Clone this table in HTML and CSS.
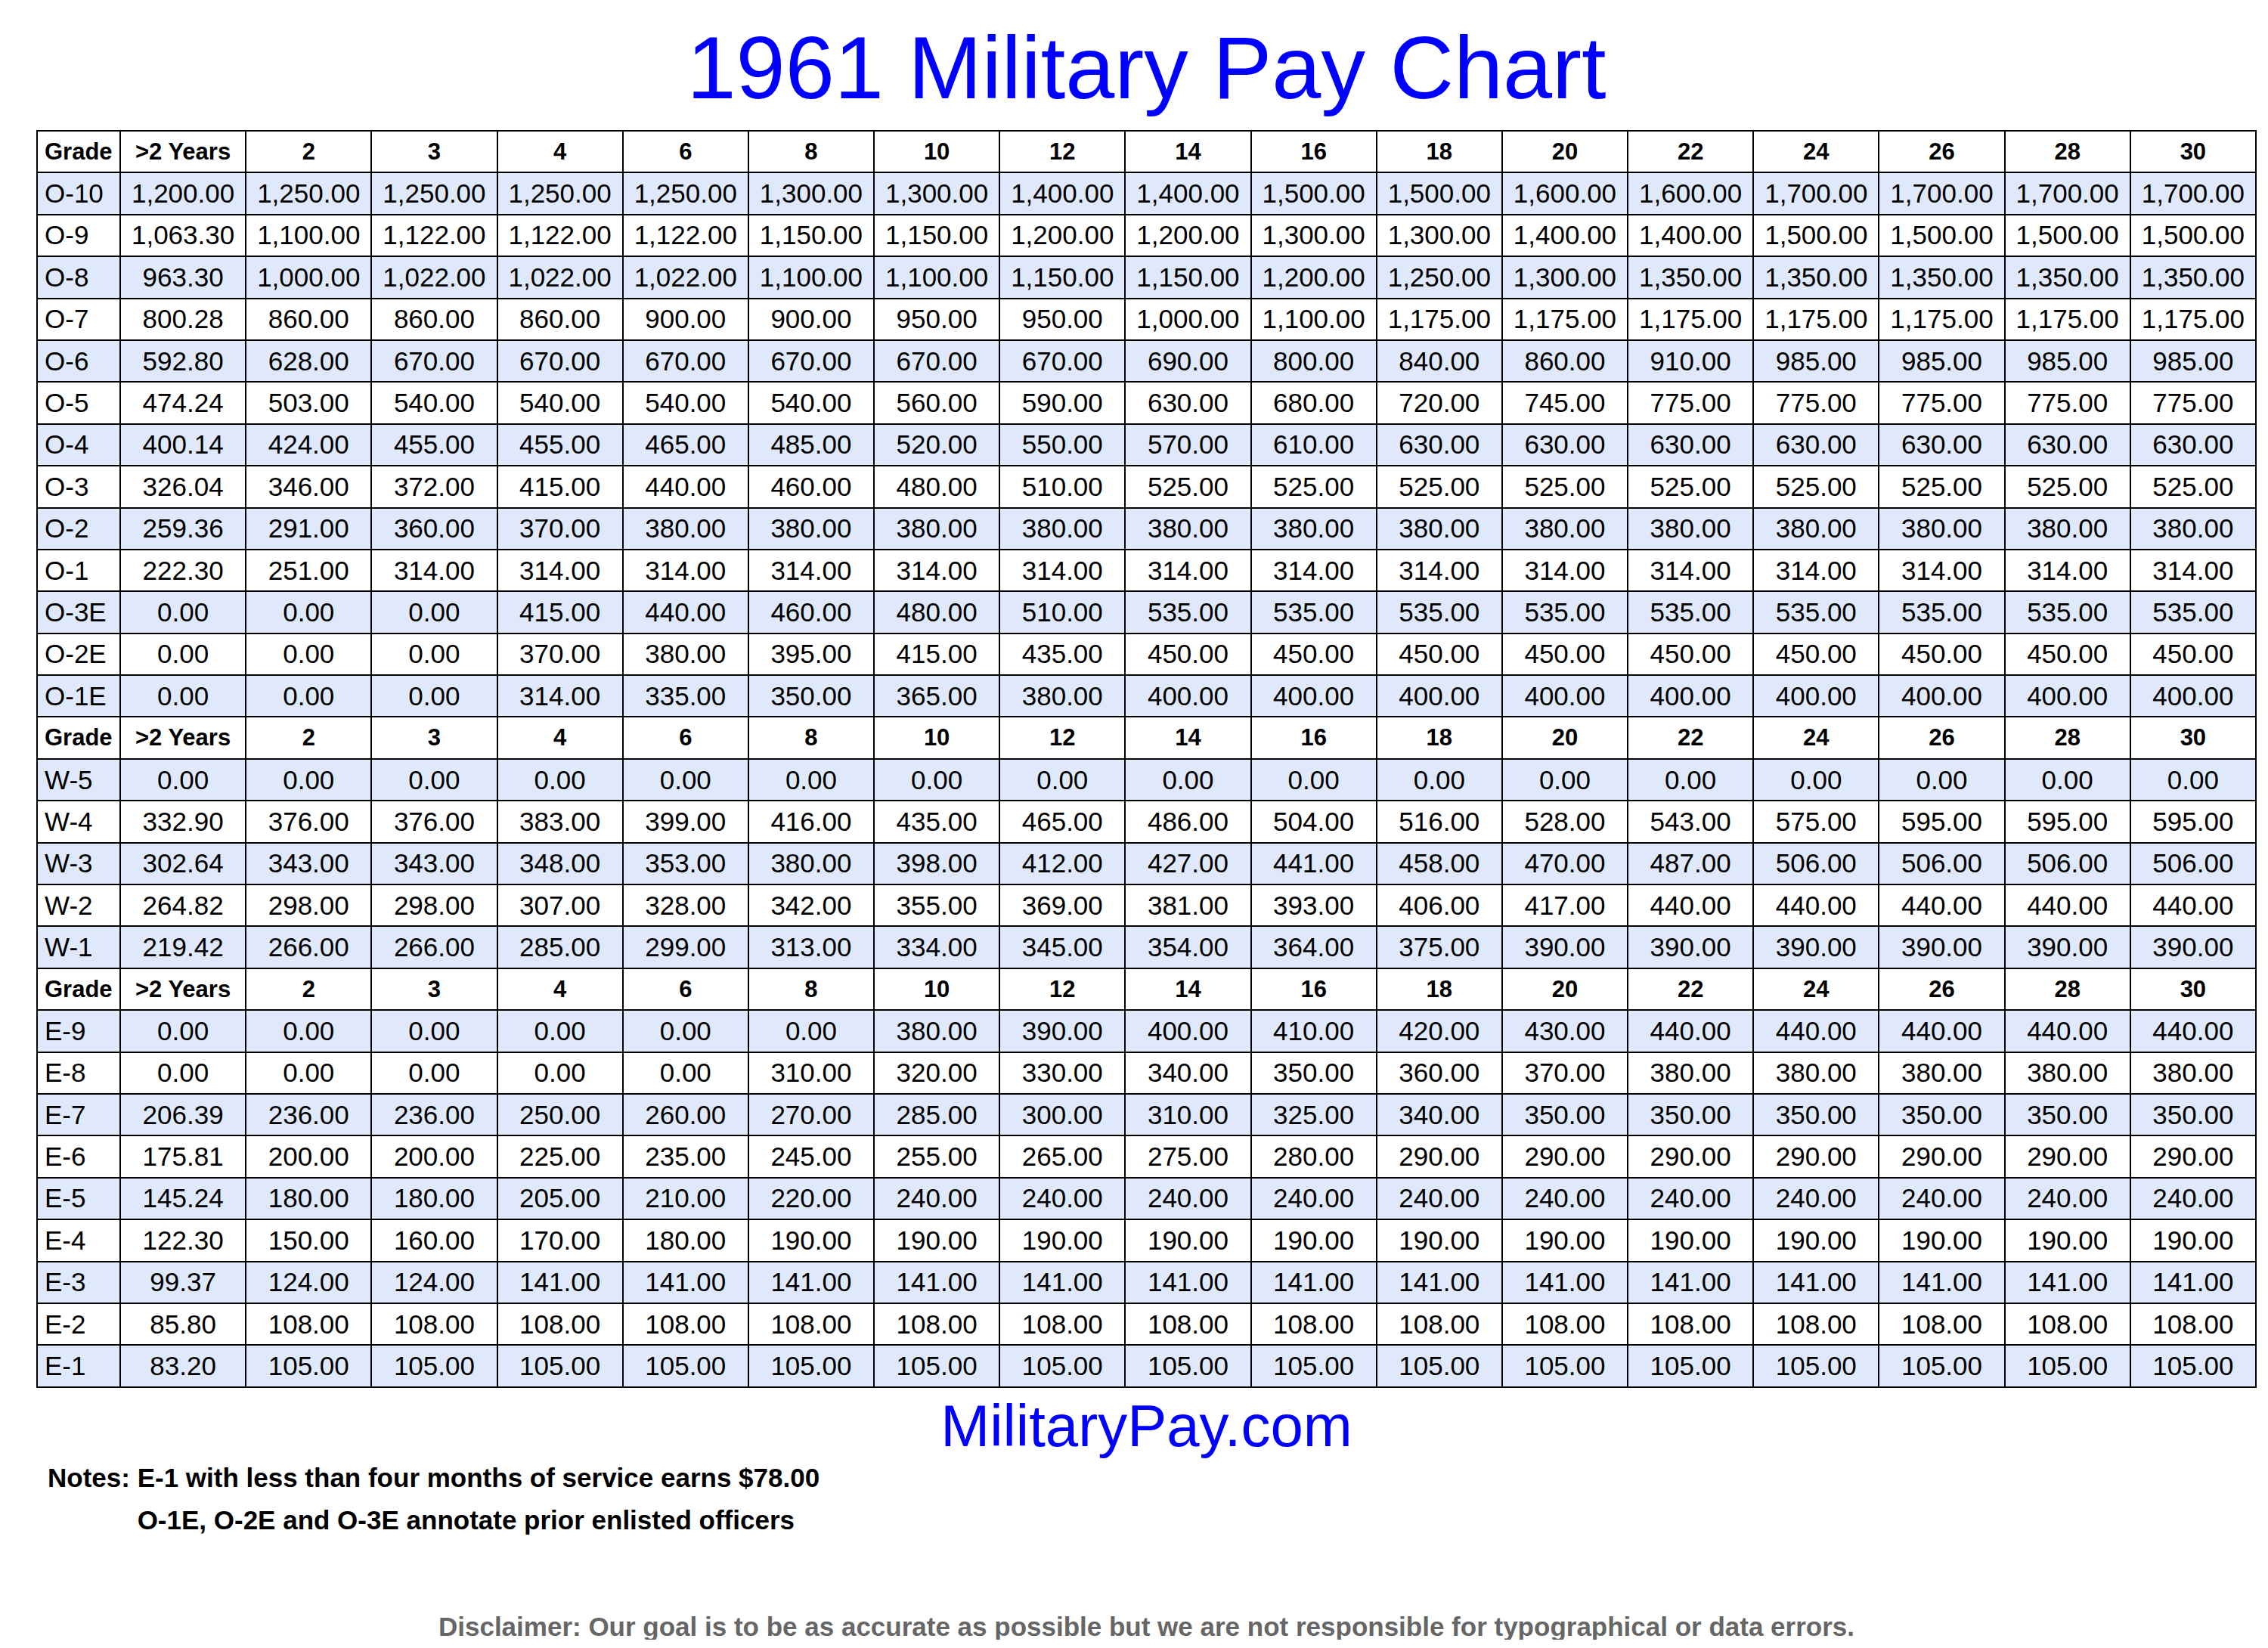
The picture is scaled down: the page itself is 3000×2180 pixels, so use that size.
FILE: index.html
```html
<!DOCTYPE html>
<html lang="en">
<head>
<meta charset="utf-8">
<title>1961 Military Pay Chart</title>
<link rel="stylesheet" href="styles.css">
</head>
<body>
<div class="page">
<h1 class="title">1961 Military Pay Chart</h1>
<table class="pay">
<colgroup><col class="col-grade"><col span="17"></colgroup>
<tbody>
<tr class="hd"><th>Grade</th><th>&gt;2 Years</th><th>2</th><th>3</th><th>4</th><th>6</th><th>8</th><th>10</th><th>12</th><th>14</th><th>16</th><th>18</th><th>20</th><th>22</th><th>24</th><th>26</th><th>28</th><th>30</th></tr>
<tr class="b"><td>O-10</td><td>1,200.00</td><td>1,250.00</td><td>1,250.00</td><td>1,250.00</td><td>1,250.00</td><td>1,300.00</td><td>1,300.00</td><td>1,400.00</td><td>1,400.00</td><td>1,500.00</td><td>1,500.00</td><td>1,600.00</td><td>1,600.00</td><td>1,700.00</td><td>1,700.00</td><td>1,700.00</td><td>1,700.00</td></tr>
<tr><td>O-9</td><td>1,063.30</td><td>1,100.00</td><td>1,122.00</td><td>1,122.00</td><td>1,122.00</td><td>1,150.00</td><td>1,150.00</td><td>1,200.00</td><td>1,200.00</td><td>1,300.00</td><td>1,300.00</td><td>1,400.00</td><td>1,400.00</td><td>1,500.00</td><td>1,500.00</td><td>1,500.00</td><td>1,500.00</td></tr>
<tr class="b"><td>O-8</td><td>963.30</td><td>1,000.00</td><td>1,022.00</td><td>1,022.00</td><td>1,022.00</td><td>1,100.00</td><td>1,100.00</td><td>1,150.00</td><td>1,150.00</td><td>1,200.00</td><td>1,250.00</td><td>1,300.00</td><td>1,350.00</td><td>1,350.00</td><td>1,350.00</td><td>1,350.00</td><td>1,350.00</td></tr>
<tr><td>O-7</td><td>800.28</td><td>860.00</td><td>860.00</td><td>860.00</td><td>900.00</td><td>900.00</td><td>950.00</td><td>950.00</td><td>1,000.00</td><td>1,100.00</td><td>1,175.00</td><td>1,175.00</td><td>1,175.00</td><td>1,175.00</td><td>1,175.00</td><td>1,175.00</td><td>1,175.00</td></tr>
<tr class="b"><td>O-6</td><td>592.80</td><td>628.00</td><td>670.00</td><td>670.00</td><td>670.00</td><td>670.00</td><td>670.00</td><td>670.00</td><td>690.00</td><td>800.00</td><td>840.00</td><td>860.00</td><td>910.00</td><td>985.00</td><td>985.00</td><td>985.00</td><td>985.00</td></tr>
<tr><td>O-5</td><td>474.24</td><td>503.00</td><td>540.00</td><td>540.00</td><td>540.00</td><td>540.00</td><td>560.00</td><td>590.00</td><td>630.00</td><td>680.00</td><td>720.00</td><td>745.00</td><td>775.00</td><td>775.00</td><td>775.00</td><td>775.00</td><td>775.00</td></tr>
<tr class="b"><td>O-4</td><td>400.14</td><td>424.00</td><td>455.00</td><td>455.00</td><td>465.00</td><td>485.00</td><td>520.00</td><td>550.00</td><td>570.00</td><td>610.00</td><td>630.00</td><td>630.00</td><td>630.00</td><td>630.00</td><td>630.00</td><td>630.00</td><td>630.00</td></tr>
<tr><td>O-3</td><td>326.04</td><td>346.00</td><td>372.00</td><td>415.00</td><td>440.00</td><td>460.00</td><td>480.00</td><td>510.00</td><td>525.00</td><td>525.00</td><td>525.00</td><td>525.00</td><td>525.00</td><td>525.00</td><td>525.00</td><td>525.00</td><td>525.00</td></tr>
<tr class="b"><td>O-2</td><td>259.36</td><td>291.00</td><td>360.00</td><td>370.00</td><td>380.00</td><td>380.00</td><td>380.00</td><td>380.00</td><td>380.00</td><td>380.00</td><td>380.00</td><td>380.00</td><td>380.00</td><td>380.00</td><td>380.00</td><td>380.00</td><td>380.00</td></tr>
<tr><td>O-1</td><td>222.30</td><td>251.00</td><td>314.00</td><td>314.00</td><td>314.00</td><td>314.00</td><td>314.00</td><td>314.00</td><td>314.00</td><td>314.00</td><td>314.00</td><td>314.00</td><td>314.00</td><td>314.00</td><td>314.00</td><td>314.00</td><td>314.00</td></tr>
<tr class="b"><td>O-3E</td><td>0.00</td><td>0.00</td><td>0.00</td><td>415.00</td><td>440.00</td><td>460.00</td><td>480.00</td><td>510.00</td><td>535.00</td><td>535.00</td><td>535.00</td><td>535.00</td><td>535.00</td><td>535.00</td><td>535.00</td><td>535.00</td><td>535.00</td></tr>
<tr><td>O-2E</td><td>0.00</td><td>0.00</td><td>0.00</td><td>370.00</td><td>380.00</td><td>395.00</td><td>415.00</td><td>435.00</td><td>450.00</td><td>450.00</td><td>450.00</td><td>450.00</td><td>450.00</td><td>450.00</td><td>450.00</td><td>450.00</td><td>450.00</td></tr>
<tr class="b"><td>O-1E</td><td>0.00</td><td>0.00</td><td>0.00</td><td>314.00</td><td>335.00</td><td>350.00</td><td>365.00</td><td>380.00</td><td>400.00</td><td>400.00</td><td>400.00</td><td>400.00</td><td>400.00</td><td>400.00</td><td>400.00</td><td>400.00</td><td>400.00</td></tr>
<tr class="hd"><th>Grade</th><th>&gt;2 Years</th><th>2</th><th>3</th><th>4</th><th>6</th><th>8</th><th>10</th><th>12</th><th>14</th><th>16</th><th>18</th><th>20</th><th>22</th><th>24</th><th>26</th><th>28</th><th>30</th></tr>
<tr class="b"><td>W-5</td><td>0.00</td><td>0.00</td><td>0.00</td><td>0.00</td><td>0.00</td><td>0.00</td><td>0.00</td><td>0.00</td><td>0.00</td><td>0.00</td><td>0.00</td><td>0.00</td><td>0.00</td><td>0.00</td><td>0.00</td><td>0.00</td><td>0.00</td></tr>
<tr><td>W-4</td><td>332.90</td><td>376.00</td><td>376.00</td><td>383.00</td><td>399.00</td><td>416.00</td><td>435.00</td><td>465.00</td><td>486.00</td><td>504.00</td><td>516.00</td><td>528.00</td><td>543.00</td><td>575.00</td><td>595.00</td><td>595.00</td><td>595.00</td></tr>
<tr class="b"><td>W-3</td><td>302.64</td><td>343.00</td><td>343.00</td><td>348.00</td><td>353.00</td><td>380.00</td><td>398.00</td><td>412.00</td><td>427.00</td><td>441.00</td><td>458.00</td><td>470.00</td><td>487.00</td><td>506.00</td><td>506.00</td><td>506.00</td><td>506.00</td></tr>
<tr><td>W-2</td><td>264.82</td><td>298.00</td><td>298.00</td><td>307.00</td><td>328.00</td><td>342.00</td><td>355.00</td><td>369.00</td><td>381.00</td><td>393.00</td><td>406.00</td><td>417.00</td><td>440.00</td><td>440.00</td><td>440.00</td><td>440.00</td><td>440.00</td></tr>
<tr class="b"><td>W-1</td><td>219.42</td><td>266.00</td><td>266.00</td><td>285.00</td><td>299.00</td><td>313.00</td><td>334.00</td><td>345.00</td><td>354.00</td><td>364.00</td><td>375.00</td><td>390.00</td><td>390.00</td><td>390.00</td><td>390.00</td><td>390.00</td><td>390.00</td></tr>
<tr class="hd"><th>Grade</th><th>&gt;2 Years</th><th>2</th><th>3</th><th>4</th><th>6</th><th>8</th><th>10</th><th>12</th><th>14</th><th>16</th><th>18</th><th>20</th><th>22</th><th>24</th><th>26</th><th>28</th><th>30</th></tr>
<tr class="b"><td>E-9</td><td>0.00</td><td>0.00</td><td>0.00</td><td>0.00</td><td>0.00</td><td>0.00</td><td>380.00</td><td>390.00</td><td>400.00</td><td>410.00</td><td>420.00</td><td>430.00</td><td>440.00</td><td>440.00</td><td>440.00</td><td>440.00</td><td>440.00</td></tr>
<tr><td>E-8</td><td>0.00</td><td>0.00</td><td>0.00</td><td>0.00</td><td>0.00</td><td>310.00</td><td>320.00</td><td>330.00</td><td>340.00</td><td>350.00</td><td>360.00</td><td>370.00</td><td>380.00</td><td>380.00</td><td>380.00</td><td>380.00</td><td>380.00</td></tr>
<tr class="b"><td>E-7</td><td>206.39</td><td>236.00</td><td>236.00</td><td>250.00</td><td>260.00</td><td>270.00</td><td>285.00</td><td>300.00</td><td>310.00</td><td>325.00</td><td>340.00</td><td>350.00</td><td>350.00</td><td>350.00</td><td>350.00</td><td>350.00</td><td>350.00</td></tr>
<tr><td>E-6</td><td>175.81</td><td>200.00</td><td>200.00</td><td>225.00</td><td>235.00</td><td>245.00</td><td>255.00</td><td>265.00</td><td>275.00</td><td>280.00</td><td>290.00</td><td>290.00</td><td>290.00</td><td>290.00</td><td>290.00</td><td>290.00</td><td>290.00</td></tr>
<tr class="b"><td>E-5</td><td>145.24</td><td>180.00</td><td>180.00</td><td>205.00</td><td>210.00</td><td>220.00</td><td>240.00</td><td>240.00</td><td>240.00</td><td>240.00</td><td>240.00</td><td>240.00</td><td>240.00</td><td>240.00</td><td>240.00</td><td>240.00</td><td>240.00</td></tr>
<tr><td>E-4</td><td>122.30</td><td>150.00</td><td>160.00</td><td>170.00</td><td>180.00</td><td>190.00</td><td>190.00</td><td>190.00</td><td>190.00</td><td>190.00</td><td>190.00</td><td>190.00</td><td>190.00</td><td>190.00</td><td>190.00</td><td>190.00</td><td>190.00</td></tr>
<tr class="b"><td>E-3</td><td>99.37</td><td>124.00</td><td>124.00</td><td>141.00</td><td>141.00</td><td>141.00</td><td>141.00</td><td>141.00</td><td>141.00</td><td>141.00</td><td>141.00</td><td>141.00</td><td>141.00</td><td>141.00</td><td>141.00</td><td>141.00</td><td>141.00</td></tr>
<tr><td>E-2</td><td>85.80</td><td>108.00</td><td>108.00</td><td>108.00</td><td>108.00</td><td>108.00</td><td>108.00</td><td>108.00</td><td>108.00</td><td>108.00</td><td>108.00</td><td>108.00</td><td>108.00</td><td>108.00</td><td>108.00</td><td>108.00</td><td>108.00</td></tr>
<tr class="b"><td>E-1</td><td>83.20</td><td>105.00</td><td>105.00</td><td>105.00</td><td>105.00</td><td>105.00</td><td>105.00</td><td>105.00</td><td>105.00</td><td>105.00</td><td>105.00</td><td>105.00</td><td>105.00</td><td>105.00</td><td>105.00</td><td>105.00</td><td>105.00</td></tr>
</tbody>
</table>
<div class="site">MilitaryPay.com</div>
<div class="notes">
<span class="notes-label">Notes:</span>
<div class="notes-lines">
<div>E-1 with less than four months of service earns $78.00</div>
<div>O-1E, O-2E and O-3E annotate prior enlisted officers</div>
</div>
</div>
<p class="disclaimer">Disclaimer: Our goal is to be as accurate as possible but we are not responsible for typographical or data errors.</p>
</div>
</body>
</html>
```
FILE: styles.css
```css
html, body {
  margin: 0;
  padding: 0;
  background: #ffffff;
}
body {
  font-family: "Liberation Sans", Arial, sans-serif;
  color: #000000;
}
.page {
  width: 2937px;
  margin-left: 48px;
}
.title {
  margin: 32px 0 24px;
  font-size: 117px;
  line-height: 116px;
  font-weight: normal;
  color: #0000ff;
  text-align: center;
}
.pay {
  width: 2937px;
  table-layout: fixed;
  border-collapse: collapse;
  border: 2px solid #000;
}
.col-grade {
  width: 110px;
}
.pay tr {
  height: 55.4px;
}
.pay th,
.pay td {
  border: 2px solid #000;
  padding: 0;
  text-align: center;
  vertical-align: middle;
  white-space: nowrap;
}
.pay th {
  font-size: 31px;
  font-weight: bold;
  background: #ffffff;
}
.pay td {
  font-size: 35px;
  font-weight: normal;
}
.pay th:first-child,
.pay td:first-child {
  text-align: left;
  padding-left: 9px;
}
.pay tr.b td {
  background: #dfe9fb;
}
.site {
  margin-top: 11px;
  font-size: 78px;
  line-height: 78px;
  color: #0000ff;
  text-align: center;
}
.notes {
  display: flex;
  margin: 2px 0 0 15px;
  font-size: 35px;
  line-height: 56px;
  font-weight: bold;
}
.notes-label {
  margin-right: 0.278em;
}
.disclaimer {
  margin: 95px 0 0;
  font-size: 35px;
  line-height: 35px;
  font-weight: bold;
  color: #666666;
  text-align: center;
}
```
